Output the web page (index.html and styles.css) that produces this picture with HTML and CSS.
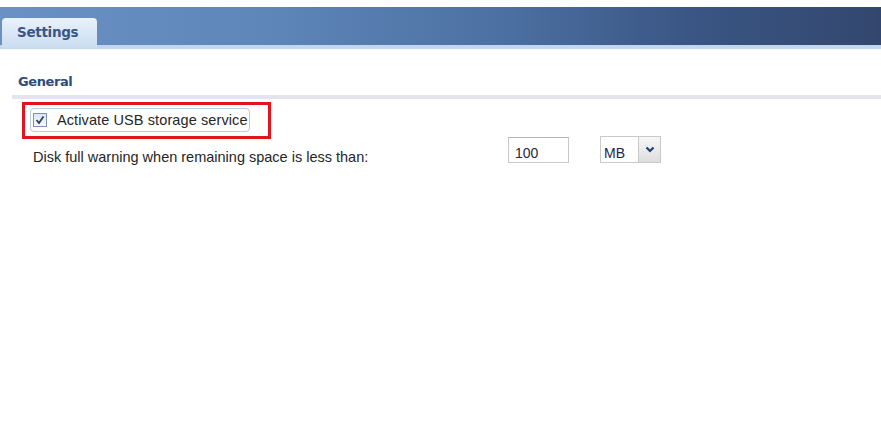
FILE: index.html
```html
<!DOCTYPE html>
<html>
<head>
<meta charset="utf-8">
<link rel="stylesheet" href="styles.css">
</head>
<body>
<div class="header">
  <div class="tab">Settings</div>
</div>
<div class="content">
  <div class="section-title">General</div>
  <div class="form">
    <div class="row row-check">
      <label class="bubble">
        <span class="checkbox">
          <svg width="10" height="10" viewBox="0 0 10 10"><path d="M1.5 5 L4 8 L8.5 1.5" fill="none" stroke="#2d3f6e" stroke-width="1.8"/></svg>
        </span>
        <span class="check-label">Activate USB storage service</span>
      </label>
    </div>
    <div class="row row-disk">
      <span class="disk-label">Disk full warning when remaining space is less than:</span>
      <span class="text-input">100</span>
      <span class="select">
        <span class="select-value">MB</span>
        <span class="select-btn">
          <svg width="10" height="7" viewBox="0 0 10 7"><path d="M1.5 1.5 L5 5 L8.5 1.5" fill="none" stroke="#1f3f7a" stroke-width="2.2"/></svg>
        </span>
      </span>
    </div>
    <div class="highlight"></div>
  </div>
</div>
</body>
</html>
```
FILE: styles.css
```css
html, body {
  margin: 0;
  padding: 0;
  background: #ffffff;
  width: 881px;
  height: 448px;
  overflow: hidden;
  font-family: "Liberation Sans", Arial, sans-serif;
  color: #333333;
}

.header {
  margin-top: 7px;
  height: 38px;
  display: flex;
  align-items: flex-end;
  background: linear-gradient(to right, #6b91c3 0%, #5f86b9 30%, #4b6fa0 58%, #3a5684 78%, #33476e 100%);
  border-bottom: 4px solid #c2d6ef;
}

.tab {
  margin-left: 2px;
  margin-bottom: -3px;
  width: 95px;
  height: 30px;
  box-sizing: border-box;
  background: linear-gradient(to bottom, #eaf2fb 0%, #d8e7f7 50%, #cadcf1 100%);
  border-radius: 4px 4px 0 0;
  font-family: "DejaVu Sans", Verdana, sans-serif;
  font-weight: bold;
  font-size: 13.5px;
  color: #3b5684;
  padding-left: 15px;
  padding-top: 6px;
  letter-spacing: -0.3px;
}

.content {
  padding-top: 25px;
}

.section-title {
  margin-left: 12px;
  padding-left: 6px;
  height: 21px;
  font-family: "DejaVu Sans", Verdana, sans-serif;
  font-weight: bold;
  font-size: 13px;
  letter-spacing: -0.4px;
  color: #2f4b7a;
  border-bottom: 4px solid #e4e4ec;
}

.form {
  position: relative;
  padding-top: 9px;
  padding-left: 30px;
}

.row {
  display: flex;
  align-items: center;
}

.bubble {
  display: inline-flex;
  align-items: center;
  height: 24px;
  width: 220px;
  box-sizing: border-box;
  border: 1px solid #b9cbe6;
  border-radius: 4px;
  background: #ffffff;
  padding-left: 2px;
}

.checkbox {
  width: 12px;
  height: 12px;
  border: 1px solid #7f93b8;
  background: linear-gradient(to bottom, #dfe6f2, #f6f8fc);
  display: flex;
  align-items: center;
  justify-content: center;
}

.check-label {
  margin-left: 10px;
  font-size: 14.5px;
  color: #262626;
  letter-spacing: 0.1px;
}

.row-disk {
  margin-top: 5px;
  height: 26px;
  align-items: flex-start;
}

.disk-label {
  margin-left: 3px;
  padding-top: 12px;
  width: 475px;
  font-size: 14.5px;
  color: #262626;
  line-height: 17px;
}

.text-input {
  width: 61px;
  height: 26px;
  box-sizing: border-box;
  border: 1px solid #c9c9c9;
  border-top-color: #b5b5b5;
  padding-left: 6px;
  padding-top: 6px;
  font-size: 14px;
  line-height: 18px;
  color: #2a2540;
}

.select {
  margin-left: 31px;
  margin-top: -1px;
  width: 61px;
  height: 27px;
  box-sizing: border-box;
  border: 1px solid #c9c9c9;
  display: flex;
}

.select-value {
  flex: 1;
  padding-left: 3px;
  padding-top: 7px;
  font-size: 14px;
  line-height: 18px;
  color: #2a2540;
}

.select-btn {
  width: 21px;
  border-left: 1px solid #c9c9c9;
  background: linear-gradient(to bottom, #f7f7f7, #dedede);
  display: flex;
  align-items: center;
  justify-content: center;
}

.highlight {
  position: absolute;
  left: 22px;
  top: 3px;
  width: 249px;
  height: 37px;
  box-sizing: border-box;
  border: 3px solid #e2151c;
  pointer-events: none;
}
```
